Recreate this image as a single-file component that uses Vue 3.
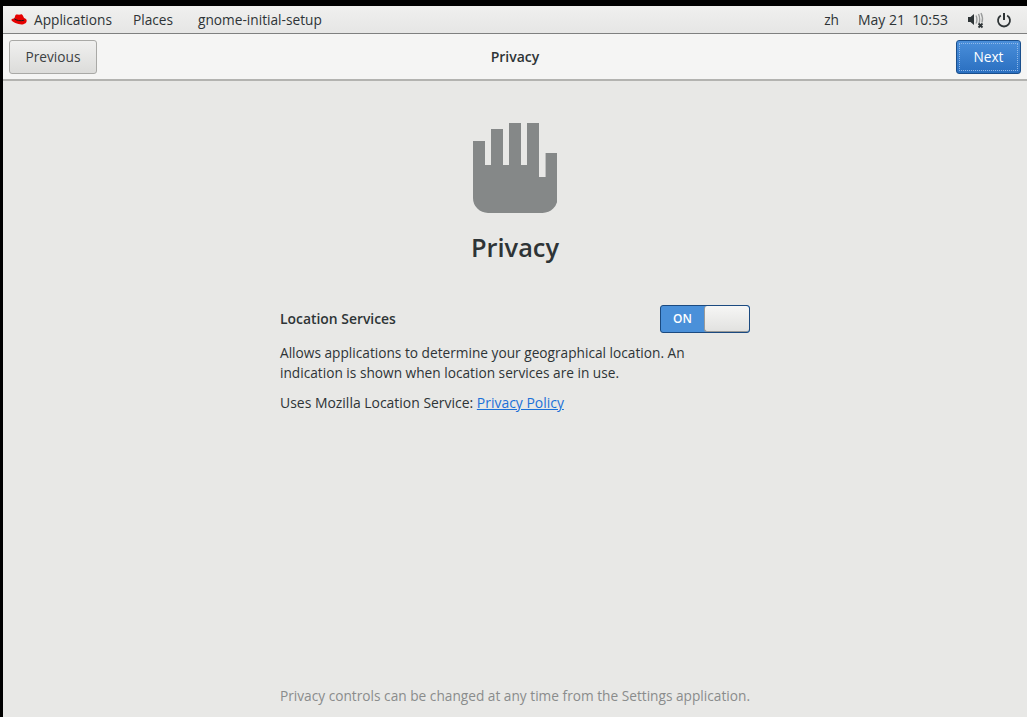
<template>
  <div class="screen">
    <div class="panel">
      <div class="panel-left">
        <div class="panel-item apps">
          <svg class="hat" width="16" height="11" viewBox="0 0 16 11">
            <path d="M.3 5.800C.8 4.900 2.200 4.600 3.300 4.600L4.400 1.200C5.300.2 6.800.8 8 .8 9.100.8 10 0 11 .4 12 .9 12.600 3 13.100 4.100 14.500 4.700 15.700 5.400 15.700 6.700 15.700 8.900 13.200 10.400 10.600 10.400 6.800 10.400 1.200 8.300.3 5.800z" fill="#e60000"/>
            <path d="M3.300 4.800C5 6.300 9.500 7.500 13.200 6.200" stroke="#1a1a1a" stroke-width="1" fill="none"/>
          </svg>
          <span>Applications</span>
        </div>
        <div class="panel-item places">Places</div>
        <div class="panel-item appname">gnome-initial-setup</div>
      </div>
      <div class="panel-right">
        <span class="lang">zh</span>
        <span class="clock">May 21&nbsp;&nbsp;10:53</span>
        <svg class="vol" width="18" height="18" viewBox="0 0 18 18">
          <path d="M1 6h2.500L7 3v11L3.500 11H1z" fill="#2e3436"/>
          <path d="M9 4.500c1.200 2 1.200 6 0 8M11.500 3c1.500 3 1.500 8 .3 9.500M14 2c1.500 3 1.700 7 1 9.500" stroke="#9a9c9c" stroke-width="1.400" fill="none"/>
          <path d="M11.500 12.500l4 4m0-4l-4 4" stroke="#2e3436" stroke-width="1.800"/>
        </svg>
        <svg class="power" width="16" height="16" viewBox="0 0 16 16">
          <path d="M8 1v7" stroke="#2e3436" stroke-width="2" fill="none"/>
          <path d="M4.800 3.400a6 6 0 1 0 6.400 0" stroke="#2e3436" stroke-width="1.800" fill="none"/>
        </svg>
      </div>
    </div>
    <div class="header">
      <button class="btn prev">Previous</button>
      <div class="title">Privacy</div>
      <button class="btn next"><span>Next</span></button>
    </div>
    <div class="page">
      <svg class="hand" width="84.600" height="90" viewBox="0 0 84.600 90">
        <path d="M0 18h12v24h6V6h12v36h6V0h12v42h6V0h12v54h6.600V30h12v45a15 15 0 0 1-15 15H15A15 15 0 0 1 0 75z" fill="#858888"/>
      </svg>
      <h1 class="heading">Privacy</h1>
      <div class="settings">
        <div class="row">
          <span class="label">Location Services</span>
          <div class="switch">
            <span class="on">ON</span>
            <span class="knob"></span>
          </div>
        </div>
        <p class="desc">Allows applications to determine your geographical location. An indication is shown when location services are in use.</p>
        <p class="uses">Uses Mozilla Location Service: <a class="link">Privacy Policy</a></p>
      </div>
      <p class="footer">Privacy controls can be changed at any time from the Settings application.</p>
    </div>
  </div>
</template>

<script setup>
</script>

<style>
html, body {
  margin: 0;
  background: #000;
}
</style>

<style scoped>
.screen {
  width: 1027px;
  height: 717px;
  box-sizing: border-box;
  padding: 6px 0 0 3px;
  background: #000;
  display: flex;
  flex-direction: column;
  font-family: "Open Sans", "Noto Sans", sans-serif;
  font-size: 13.7px;
  color: #2e3436;
  overflow: hidden;
}

.panel {
  height: 27px;
  flex: none;
  display: flex;
  justify-content: space-between;
  align-items: center;
  background: linear-gradient(#f0f0ef, #e6e6e5);
  border-bottom: 1px solid #7f8080;
}

.panel-left {
  display: flex;
  align-items: center;
}

.panel-item {
  display: flex;
  align-items: center;
}

.apps {
  margin-left: 8px;
  gap: 7px;
}

.places {
  margin-left: 21px;
}

.appname {
  margin-left: 25px;
}

.panel-right {
  display: flex;
  align-items: center;
}

.lang {
  margin-right: 19px;
}

.clock {
  margin-right: 19px;
  font-size: 14px;
}

.vol {
  margin-right: 11px;
}

.power {
  margin-right: 15px;
}

.header {
  height: 45px;
  flex: none;
  display: flex;
  align-items: center;
  justify-content: space-between;
  padding: 0 6px;
  background: #f5f5f4;
  border-bottom: 2px solid #b3b3b0;
  position: relative;
}

.btn {
  height: 34px;
  font-family: inherit;
  font-size: 13.7px;
  box-sizing: border-box;
  border-radius: 3px;
  padding: 0;
}

.prev {
  width: 88px;
  color: #3c4143;
  background: linear-gradient(#f0f0ef, #dcdcda);
  border: 1px solid #a9a9a6;
}

.next {
  width: 65px;
  color: #fff;
  background: linear-gradient(#4a8fdb, #2a6fc0);
  border: 1px solid #1a4f8c;
  padding: 2px;
}

.next span {
  display: flex;
  height: 100%;
  align-items: center;
  justify-content: center;
  border: 1px dotted #8fb8e8;
  box-sizing: border-box;
}

.title {
  position: absolute;
  left: 0;
  right: 0;
  text-align: center;
  font-weight: 600;
  font-size: 14px;
  color: #2e3436;
}

.page {
  flex: 1;
  display: flex;
  flex-direction: column;
  align-items: center;
  background: #e8e8e6;
  padding-top: 41.700px;
}

.hand {
  display: block;
}

.heading {
  margin: 18.300px 0 0;
  font-size: 25.400px;
  line-height: 33px;
  font-weight: 600;
  color: #2e3436;
}

.settings {
  width: 470px;
  margin-top: 41px;
}

.row {
  display: flex;
  align-items: center;
  justify-content: space-between;
  height: 28px;
}

.label {
  font-weight: 600;
  font-size: 13.900px;
}

.switch {
  width: 90px;
  height: 28px;
  box-sizing: border-box;
  border: 1px solid #1b4a80;
  border-radius: 3px;
  background: #4a90d9;
  display: flex;
  overflow: hidden;
}

.on {
  width: 43px;
  text-align: center;
  line-height: 26px;
  font-size: 12px;
  font-weight: 600;
  color: #fff;
}

.knob {
  flex: 1;
  background: linear-gradient(#f6f6f5, #e2e2e0);
  border-left: 1px solid #9a9a98;
  border-bottom: 1px solid #9a9a98;
  border-radius: 3px;
}

.desc {
  margin: 10px 0 0;
  line-height: 20px;
}

.uses {
  margin: 10px 0 0;
  line-height: 20px;
  font-size: 13.950px;
}

.link {
  color: #1c71d8;
  text-decoration: underline;
}

.footer {
  margin: auto 0 11px;
  color: #8a8c8c;
  line-height: 20px;
}
</style>
